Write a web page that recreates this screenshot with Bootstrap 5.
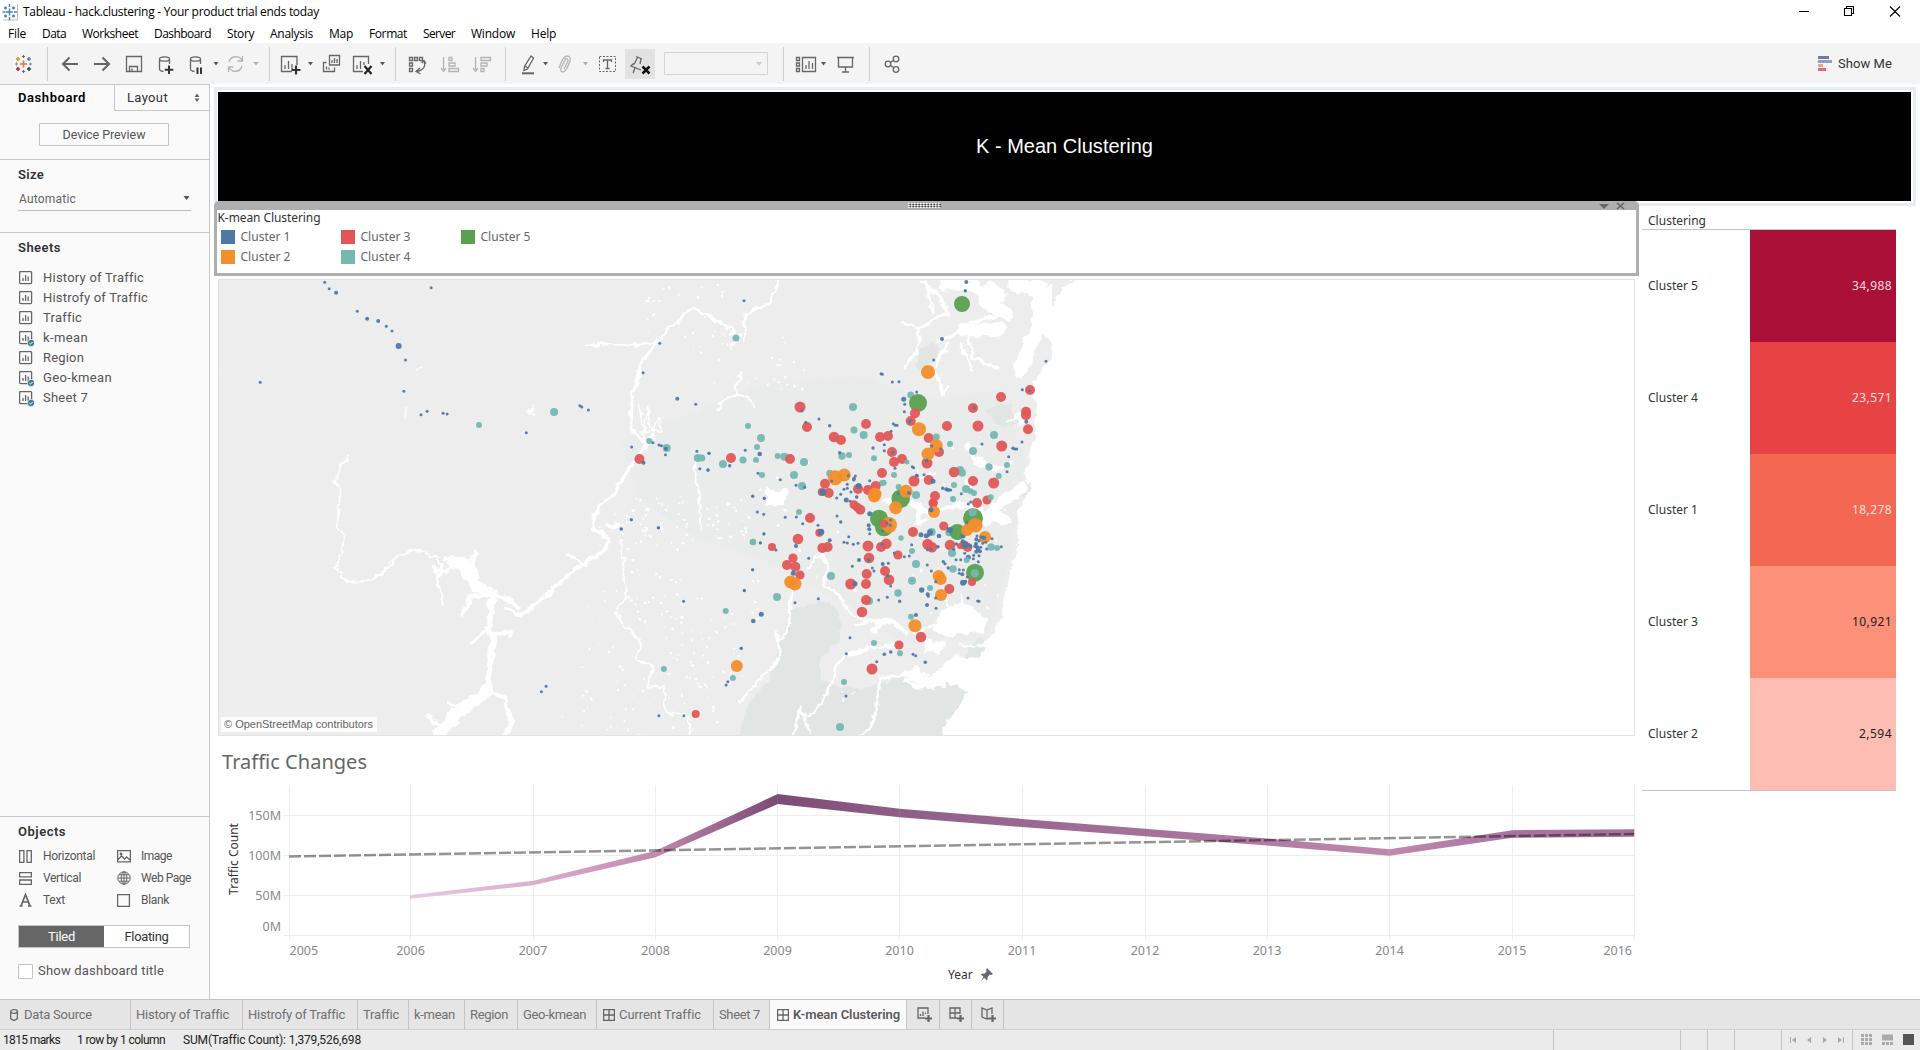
<!DOCTYPE html>
<html lang="en">
<head>
<meta charset="utf-8">
<title>Tableau - hack.clustering</title>
<link rel="stylesheet" href="https://cdn.jsdelivr.net/npm/bootstrap@5.3.0/dist/css/bootstrap.min.css">
<script src="https://cdn.jsdelivr.net/npm/bootstrap@5.3.0/dist/js/bootstrap.bundle.min.js"></script>
<style>
body{width:1920px;height:1050px;overflow:hidden;font:13px/16px Roboto,"Liberation Sans",sans-serif;color:#333;background:#fff}
svg{display:block;flex:none}
.win-font{font-family:"Open Sans","Noto Sans",sans-serif;font-size:12px;color:#000}
.viz-font{font-family:"Noto Sans","Open Sans",sans-serif;font-size:12px}
[data-w]{white-space:nowrap;display:inline-block}
.titlebar{height:23px}
.menubar{height:20px}
.menubar .nav-link{padding:3px 8px 1px;line-height:16px;color:#000}
.toolbar{height:41px;background:#f4f4f4}
.tool-group{height:34px;border-right:1px solid #cfcfcf}
.ico{fill:none;stroke:#666;stroke-width:1.3}
.faded{opacity:.45}
.caret-s{fill:#555;stroke:none}
.sidebar{width:210px;background:#fafafa;border-right:1px solid #c8c8c8;border-top:1px solid #c8c8c8}
.side-tabs{height:26px}
.tab-off{width:95px;border-left:1px solid #c8c8c8;border-bottom:1px solid #c8c8c8;padding-left:12px}
.tab-on{width:114px;padding-left:18px;padding-bottom:1px;color:#000}
.semi{font-weight:600}
.dev-btn{width:130px;height:23px;border:1px solid #c4c4c4;border-radius:1px;background:#fbfbfb;padding:0;font-size:12.5px;line-height:14px;margin:12px 0 0 39px;color:#555}
.side-rule{border-top:1px solid #c8c8c8}
.size-pick{width:173px;height:24px;margin-left:18px;border-bottom:1px solid #bbb;color:#666}
.sheet-row{height:20px;padding-left:19px;gap:11px;color:#555}
.obj-row{height:22px;font-size:12px;color:#555}
.obj-a{width:98px;gap:11px}
.obj-b{gap:10px}
.tile-switch{width:172px;height:23px;margin-left:18px;border:1px solid #c4c4c4;font-size:13px}
.tile-switch>div{width:50%}
.tile-on{background:#666;color:#fff}
.check-box{width:15px;height:15px;border:1px solid #c4c4c4;border-radius:1px;background:#fff}
.title-frame{width:1702px;height:119px;margin:3px 0 0 4px;border:3px solid #e2eef3;padding:2px 2px 2px 1px}
.title-black{background:#000;color:#fff;font:20px "Liberation Sans",Arial,sans-serif;height:109px}
.viz-row{margin-top:-5px}
.left-col{width:1425px;margin-left:4px}
.legend-frame{height:75px;border:3px solid #afafaf;border-top:0;border-radius:6px 6px 0 0;background:#fff;margin-left:-.5px;position:relative}
.legend-bar{height:9px;background:#afafaf;border-radius:5px 5px 0 0;margin:0 -3px}
.legend-grid{display:grid;grid-template-columns:120px 120px 120px;grid-auto-rows:20px;padding:1px 0 0 4px;color:#666}
.swatch{width:14px;height:14px;margin:-1px 6px 0 0}
.map-wrap{position:relative;width:1417px;height:457px;margin:3px 0 0 4px;border:1px solid #e2e2e2}
.attrib{position:absolute;left:2px;bottom:3px;width:156px;height:15px;background:#ffffffcc;font:11px/15px "Liberation Sans",sans-serif;color:#666;padding-left:3px}
.chart-title{height:49px;padding:11px 0 0 8px;font-size:20px;line-height:30px;color:#666}
.right-col{width:254px;margin-left:3px}
.table-head{height:29px;border-bottom:1px solid #c4c4c4;padding:11px 0 0 6px;line-height:18px}
.heat-row{height:112px;padding-left:6px}
.heat-cell{width:146px;height:112px;padding-right:4px}
.sheet-tabs{height:31px;background:#e5e5e5;border-top:1px solid #c4c4c4;border-bottom:1px solid #cfcfcf;color:#707070}
.sheet-tab{height:29px;border-right:1px solid #c4c4c4;padding-left:5px}
.status{height:20px;background:#ebebeb;color:#222;font-size:12px}
.stat-cell{height:20px;border-left:1px solid #c4c4c4}
</style>
</head>
<body class="d-flex flex-column">
<svg width="0" height="0" class="position-absolute">
<symbol id="sheet" viewBox="0 0 15 16"><rect x=".6" y=".6" width="12" height="12" rx="1"/><path d="M4 10V7M6.600 10V4M9.200 10V5.500"/></symbol>
<symbol id="sheetok" viewBox="0 0 15 16"><rect x=".6" y=".6" width="12" height="12" rx="1"/><path d="M4 10V7M6.600 10V4M9.200 10V5.500"/><circle cx="12" cy="12" r="3.6" style="fill:#3a7c94;stroke:#fafafa;stroke-width:.6"/><path d="M10.400 12l1.200 1.200 2-2.200" style="stroke:#fff;stroke-width:1"/></symbol>
<symbol id="dash" viewBox="0 0 12 12"><path d="M.6.6H11.400V11.400H.6ZM.6 6H11.400M6 .6V11.400"/></symbol>
</svg>
<header class="win-font">
 <div class="titlebar d-flex align-items-center justify-content-between">
  <div class="d-flex align-items-center">
   <svg width="23" height="22" viewBox="0 0 23 22"><path d="M3 19H17.500V3" fill="none" stroke="#bbb"/><g stroke="#4a87ad" stroke-width="1.500" fill="none"><path d="M9.500 7.500v7M6 11h7M9.500 3v3M9.500 16v3M2.500 11h3M14 11h3M5.500 5.500v3M4 7h3M13.500 5.500v3M12 7h3M5.500 13.500v3M4 15h3M13.500 13.500v3M12 15h3"/></g></svg>
   <span data-w="296">Tableau - hack.clustering - Your product trial ends today</span>
  </div>
  <svg width="130" height="22" viewBox="1790 0 130 22" fill="none" stroke="#000" stroke-width="1.100"><path d="M1799 10.500h10M1844.500 7.500h7v7h-7zM1846.500 7.500v-2h7v7h-2M1890 5.500l10 10M1900 5.500l-10 10"/></svg>
 </div>
 <nav class="menubar nav flex-nowrap">
  <a class="nav-link"><span data-w="18">File</span></a><a class="nav-link"><span data-w="24">Data</span></a><a class="nav-link"><span data-w="56">Worksheet</span></a><a class="nav-link"><span data-w="57">Dashboard</span></a><a class="nav-link"><span data-w="27">Story</span></a><a class="nav-link"><span data-w="43">Analysis</span></a><a class="nav-link"><span data-w="24">Map</span></a><a class="nav-link"><span data-w="38">Format</span></a><a class="nav-link"><span data-w="32">Server</span></a><a class="nav-link"><span data-w="44">Window</span></a><a class="nav-link"><span data-w="25">Help</span></a>
 </nav>
</header>
<div class="toolbar d-flex align-items-center">
 <div class="tool-group"><svg width="47" height="34" viewBox="0 47 47 34" fill="none" stroke-width="1.600"><path d="M23.500 60.500v7M20 64h7" stroke="#e8762d"/><path d="M18 57v4M16 59h4" stroke="#eb912c"/><path d="M29 57v4M27 59h4" stroke="#59879b"/><path d="M18 67v4M16 69h4" stroke="#c72035"/><path d="M29 67v4M27 69h4" stroke="#1f447e"/><path d="M23.500 55v3M22 56.500h3M23.500 70v3M22 71.500h3" stroke="#5b6591" stroke-width="1.200"/><path d="M15 64h3M16.500 62.500v3M29 64h3M30.500 62.500v3" stroke="#7a8fb5" stroke-width="1.200"/></svg></div>
 <div class="tool-group"><svg class="ico" width="221" height="34" viewBox="48 47 221 34">
  <path d="M78 64H63M69.500 57.500L63 64l6.500 6.500M94 64h15M102.500 57.500L109 64l-6.500 6.500" stroke-width="2"/>
  <path d="M126.500 56.500h15v15h-15zM129.500 71.500v-5h8v5M132 71.500v-3"/>
  <g id="db"><ellipse cx="164.500" cy="59" rx="5" ry="2.200"/><path d="M159.500 59v10q0 2 4 2.500M169.500 59v5"/></g><path d="M169 65.500v8.500M164.800 69.700h8.500" stroke="#333" stroke-width="2"/>
  <use href="#db" x="31"/><path d="M197.500 67.500v6.500M201 67.500v6.500" stroke="#333" stroke-width="2"/>
  <path class="caret-s" d="M213.500 62h5l-2.500 3.500z"/>
  <g class="faded"><path d="M229 62a7 7 0 0 1 13-1.500M242 66a7 7 0 0 1-13 1.500M242.500 56v5h-5M228.500 72v-5h5"/><path class="caret-s" d="M253.500 62h5l-2.500 3.500z"/></g></svg></div>
 <div class="tool-group"><svg class="ico" width="125" height="34" viewBox="270 47 125 34">
  <path d="M297 65V56.500H281.500V71.500H292M285 69v-4M288.500 69v-8M292 69v-5"/><path d="M296 65.500v9M291.500 70h9" stroke="#333" stroke-width="2.200"/><path class="caret-s" d="M308 62h5l-2.500 3.500z"/>
  <path d="M329.500 55.500h10v9.500h-10zM332 63v-3M334.500 63v-5M337 63v-4M326.500 62.500h-3v9h11v-4M326.500 69.500v-3M329 69.500v-2"/>
  <path d="M368.500 64V56.500H353.500V71.500H363M357 69v-4M360.500 69v-8M364 65v-3"/><path d="M364.500 66l7 8M371.500 66l-7 8" stroke="#222" stroke-width="2.200"/><path class="caret-s" d="M380 62h5l-2.500 3.500z"/></svg></div>
 <div class="tool-group"><svg class="ico" width="109" height="34" viewBox="396 47 109 34">
  <path d="M409.500 57.500h3v3h-3zM414.500 57.500h3v3h-3zM419.500 57.500h3v3h-3zM409.500 63h3v3h-3zM409.500 68.500h3v3h-3zM424 61q3 8-7 10.500M420 68l-4 3.500 4.500 2.500M421.500 63l2.500-2.500 2 3"/>
  <g class="faded"><path d="M443.500 57v14M441 68l2.500 3.500 2.500-3.500M449 57.500h3v3h-3zM449 63h6v3h-6zM449 68.500h9.500v3H449zM475.500 57v14M473 68l2.500 3.500 2.500-3.500M481 57.500h9.500v3H481zM481 63h6v3h-6zM481 68.500h3v3h-3z"/></g></svg></div>
 <div class="tool-group"><svg class="ico" width="277" height="34" viewBox="506 47 277 34">
  <path d="M531 56l2.500 2-6 11-3.500 1.500.500-4zM525 66l3 2"/><path d="M522 73.300h12" stroke-width="2"/><path class="caret-s" d="M543 62h5l-2.500 3.500z"/>
  <g class="faded"><path d="M564 69l4-8q0-3-2.500-2l-4.500 9q-1 4 2 4t7-11q1-5-3-5t-8 12"/><path class="caret-s" d="M583 62h5l-2.500 3.500z"/></g>
  <path d="M599.500 56.500h16v15h-16z" stroke-dasharray="2 1.500" stroke-width="1"/><path d="M603.500 62v-2h8v2M607.500 60v8.500M605.500 68.500h4"/>
  <path d="M625 49h30v30h-30z" fill="#e2e2e2" stroke="none"/><path d="M636 56.500l6 2.500M637.500 57.500l-3 6q-2 .5-3.500 2.500l10 4M641 59l-1 5M635.500 67l-2.500 6"/><path d="M642.500 66.500l7 7M649.500 66.500l-7 7" stroke="#111" stroke-width="2.500"/>
  <path d="M664.500 52.500h103v22h-103z" stroke="#d4d4d4" stroke-width="1"/><path d="M756 62h6l-3 4z" style="fill:#ccc;stroke:none"/></svg></div>
 <div class="tool-group"><svg class="ico" width="85" height="34" viewBox="784 47 85 34"><path d="M796.500 57.500h3v3h-3zM796.500 63h3v3h-3zM796.500 68.500h3v3h-3zM802.500 57.500h13v14h-13zM806 69v-4M809 69v-8M812.500 69v-6"/><path class="caret-s" d="M821 62h5l-2.500 3.500z"/><path d="M837 57.500h17M838.500 57.500v9.500h14v-9.500M845.500 67v5M842 72h7"/></svg></div>
 <svg class="ico" width="40" height="34" viewBox="870 47 40 34"><circle cx="888" cy="64" r="2.800"/><circle cx="896" cy="59" r="2.800"/><circle cx="896" cy="69.500" r="2.800"/><path d="M890.500 62.500l3-2M890.500 65.500l3 2"/></svg>
 <div class="ms-auto d-flex align-items-center" style="padding-right:28px"><svg width="20" height="17" viewBox="0 0 20 17"><path fill="#77789a" d="M0 1h11v3H0z"/><path fill="#86a3c9" d="M0 5h14v3H0z"/><path fill="#e0a885" d="M0 9h5v3H0z"/><path fill="#ea6475" d="M0 13h8v3H0z"/></svg><span data-w="54">Show Me</span></div>
</div>
<div class="d-flex flex-grow-1" style="height:915px">
 <aside class="sidebar d-flex flex-column flex-shrink-0">
  <div class="side-tabs d-flex"><div class="tab-on semi d-flex align-items-center"><span data-w="68">Dashboard</span></div><div class="tab-off d-flex align-items-center justify-content-between pe-2"><span data-w="41">Layout</span><svg width="7" height="10"><path fill="#666" d="M.5 4l2.500-3.500L5.500 4zM.5 5.500l2.500 3.500 2.500-3.500z"/></svg></div></div>
  <button class="btn dev-btn"><span data-w="83">Device Preview</span></button>
  <div class="side-rule" style="margin-top:13px;height:73px;padding-top:7px"><div class="semi ps-1" style="margin-left:14px"><span data-w="26">Size</span></div><div class="size-pick d-flex align-items-center justify-content-between mt-1" style="padding-left:1px"><span data-w="57" style="font-size:12px">Automatic</span><svg width="8" height="5"><path fill="#555" d="M.5 0h6L3.500 4z"/></svg></div></div>
  <div class="side-rule" style="padding-top:7px">
   <div class="semi" style="padding-left:18px;margin-bottom:12px"><span data-w="43">Sheets</span></div>
   <div class="sheet-row d-flex align-items-center"><svg class="ico" width="13" height="14" style="overflow:visible"><use href="#sheet" width="15" height="16"/></svg><span data-w="100">History of Traffic</span></div>
   <div class="sheet-row d-flex align-items-center"><svg class="ico" width="13" height="14" style="overflow:visible"><use href="#sheet" width="15" height="16"/></svg><span data-w="104">Histrofy of Traffic</span></div>
   <div class="sheet-row d-flex align-items-center"><svg class="ico" width="13" height="14" style="overflow:visible"><use href="#sheet" width="15" height="16"/></svg><span data-w="38">Traffic</span></div>
   <div class="sheet-row d-flex align-items-center"><svg class="ico" width="13" height="14" style="overflow:visible"><use href="#sheetok" width="15" height="16"/></svg><span data-w="45">k-mean</span></div>
   <div class="sheet-row d-flex align-items-center"><svg class="ico" width="13" height="14" style="overflow:visible"><use href="#sheet" width="15" height="16"/></svg><span data-w="41">Region</span></div>
   <div class="sheet-row d-flex align-items-center"><svg class="ico" width="13" height="14" style="overflow:visible"><use href="#sheetok" width="15" height="16"/></svg><span data-w="69">Geo-kmean</span></div>
   <div class="sheet-row d-flex align-items-center"><svg class="ico" width="13" height="14" style="overflow:visible"><use href="#sheetok" width="15" height="16"/></svg><span data-w="45">Sheet 7</span></div>
  </div>
  <div class="side-rule mt-auto" style="height:183px;padding-top:7px">
   <div class="semi" style="padding-left:18px;margin-bottom:5px"><span data-w="48">Objects</span></div>
   <div class="obj-row d-flex align-items-center" style="padding-left:19px"><div class="obj-a d-flex align-items-center"><svg class="ico" width="13" height="13"><path d="M.6.6h4.300v11.800H.6zM8 .6h4.300v11.800H8z"/></svg><span data-w="52">Horizontal</span></div><div class="obj-b d-flex align-items-center"><svg class="ico" width="14" height="13"><path d="M.6.6h12.800v11.300H.6zM.6 10l4-4 3 3 2-2 4 3.500"/><circle cx="4" cy="4" r=".8"/></svg><span data-w="31">Image</span></div></div>
   <div class="obj-row d-flex align-items-center" style="padding-left:19px"><div class="obj-a d-flex align-items-center"><svg class="ico" width="13" height="13"><path d="M.6.6h11.800v4.300H.6zM.6 8h11.800v4.300H.6z"/></svg><span data-w="38">Vertical</span></div><div class="obj-b d-flex align-items-center"><svg class="ico" width="14" height="14" style="stroke-width:1"><circle cx="7" cy="7" r="6.200"/><ellipse cx="7" cy="7" rx="2.800" ry="6.200"/><path d="M7 1v12M1 7h12M2 3.800h10M2 10.200h10"/></svg><span data-w="50">Web Page</span></div></div>
   <div class="obj-row d-flex align-items-center" style="padding-left:19px"><div class="obj-a d-flex align-items-center"><svg class="ico" width="13" height="14"><path d="M2 13L6.500 1.500 11 13M3.500 9h6M.5 13h3M9 13h3.500" stroke-width="1.700"/></svg><span data-w="22">Text</span></div><div class="obj-b d-flex align-items-center"><svg class="ico" width="14" height="13"><path d="M.6.6h11.800v11.800H.6z"/></svg><span data-w="28">Blank</span></div></div>
   <div class="tile-switch d-flex" style="margin-top:14px"><div class="tile-on d-flex align-items-center justify-content-center"><span data-w="27">Tiled</span></div><div class="bg-white d-flex align-items-center justify-content-center"><span data-w="44">Floating</span></div></div>
   <div class="d-flex align-items-center" style="margin:15px 0 0 18px;gap:5px;color:#555"><div class="check-box"></div><span data-w="126">Show dashboard title</span></div>
  </div>
 </aside>
 <main class="d-flex flex-column flex-grow-1">
  <div class="title-frame"><div class="title-black d-flex align-items-center justify-content-center"><span data-w="177">K - Mean Clustering</span></div></div>
  <div class="viz-row d-flex viz-font">
   <div class="left-col">
    <div class="legend-frame"><div class="legend-bar"><svg width="1424" height="9" viewBox="214 201 1424 9"><path d="M908 203.500h33M908 205.500h33M908 207.500h33" stroke="#fff" stroke-width="1.200" stroke-dasharray="1.500 1.500"/><path d="M909.500 204.500h32M909.500 206.500h32" stroke="#444" stroke-dasharray="1.500 1.500"/><path d="M1599 204h10l-5 5z" fill="#666"/><path d="M1617 203l7 6M1624 203l-7 6" stroke="#666" stroke-width="1.600"/></svg></div>
     <div style="padding-left:1px;line-height:16px"><span data-w="103">K-mean Clustering</span></div>
     <div class="legend-grid">
      <div class="d-flex align-items-center"><div class="swatch" style="background:#4e79a7"></div><span data-w="50">Cluster 1</span></div><div class="d-flex align-items-center"><div class="swatch" style="background:#e15759"></div><span data-w="50">Cluster 3</span></div><div class="d-flex align-items-center"><div class="swatch" style="background:#59a14f"></div><span data-w="50">Cluster 5</span></div>
      <div class="d-flex align-items-center"><div class="swatch" style="background:#f28e2b"></div><span data-w="50">Cluster 2</span></div><div class="d-flex align-items-center"><div class="swatch" style="background:#76b7b2"></div><span data-w="50">Cluster 4</span></div>
     </div></div>
    <div class="map-wrap">
     <svg id="map" width="1415" height="455" viewBox="219 280 1415 455">
      <defs><filter id="rough" x="0" y="0" width="100%" height="100%"><feTurbulence type="fractalNoise" baseFrequency=".11" numOctaves="3" seed="4"/><feDisplacementMap in="SourceGraphic" scale="8" xChannelSelector="R" yChannelSelector="G"/></filter></defs>
      <g filter="url(#rough)">
       <path fill="#ededed" d="M190 250H1062L1060 275 1077 282 1062 288 1054 305 1045 318 1043 330 1050 338 1053 350 1047 362 1042 372 1034 381 1032 393 1037 405 1035 425 1036 435 1030 450 1029 465 1020 474 1031 487 1027 497 1018 512 1018 547 1012 567 1005 593 1001 620 996 632 987 640 980 657 953 655 940 668 947 690 937 712 925 722 918 760H190Z"/>
       <path fill="#e8e9e9" d="M620 440L700 410 760 385 860 375 930 400 1000 390 1025 460 1010 560 985 640 900 640 840 600 760 560 700 540 640 500Z" opacity=".7"/>
       <path fill="#e1e6e5" d="M790 610l30-8 20 8 0 30-20 20 0 20 40 10 40-12 45 2 22 12-10 20-12 10-7 38H740l-2-25 10-30 20-25 10-30z"/>
       <path fill="#e1e6e5" d="M980 640l6 0 -6 16-14 0 2-12zM915 355l20-15 4 16-20 14zM985 410l25-8 8 18-15 8zM1020 487l10-5v10l-6 6z"/>
      </g>
      <g filter="url(#rough)" fill="none" stroke="#fff" stroke-linejoin="round" stroke-linecap="round">
       <!-- western rivers -->
       <g stroke-width="2.500">
        <path stroke-width="2" d="M349 455l-8 12-6 15 6 15-5 28 8 10-3 22-6 10 12 15 20-1 12-5 20-20 18-6 20 7 6 7-8 8 5 18 3 14"/>
        <path d="M586 346l20-3 20 3 34-5 8-13 25-19 20 9 20 12 6 6-8 12M744 340l2-28 22-8 8-14 1-12"/><path stroke-width="3" d="M655 344l-14 20-8 27-2 28 2 12 12 10"/><path d="M621 541l3 22-1 18 5 15-13 15 8 15 18 15-5 18 18 8-6 20 15-2 4 28 22 2 1 28 15 8 0 32" stroke-width="2"/>
        <path stroke-width="2" d="M740 372l-4 22-13 6-5 10M738 394l10 3 6 10M696 460l4 50 2 20"/>
        <path d="M740 703l12-14 20-22 8-12-5-22 4 8 5-3 5-15 2-30M808 570l8-14 12 4-3 25 15 10 8 17 15 8M855 625l20-3 15-2M868 650l-20 5-12 10-3 14-12 25-14 12M896 645l-18 2-20 3"/>
        <path d="M928 674l-48 3-3 25-6 25-14 10M800 710l-6 24M800 708l10 24"/>
       </g>
       <path stroke-width="3.500" d="M652 437l-20 27-18 30-14 10-8 15 2 10 16 10-8 12-34 24-28 26-20 15-14-8M606 526h12"/>
       <path stroke-width="2.500" d="M568 555l14 10-14 10"/>
       <path stroke-width="4" d="M445 558l12 6 12 18 15 12 20 2 14 12M475 552l-2 16M437 575l12-8M433 568l15 4M490 595l-20 2-8 18M488 632l24 2M486 628l-14 14M488 690l16 8 7 24-5 14M428 716l14 10M450 704l15 2"/>
       <path stroke-width="12" d="M452 561l16 6 8 20M488 690l-30 22-18 22"/><path stroke-width="7" d="M479 590l14 3-4 35 4 8-6 55-12 12"/>
       <path stroke-width="1.500" d="M640 402l4 35 3-30 5 30 5-20M640 432l22 0-4-14M646 410l8 28M404 418l3-10-2 8M528 412l5-8-2 8 5 2M417 370l5-3M218 375v8"/>
       <!-- Hawkesbury and northern beaches -->
       <path stroke-width="3" d="M922 283l16 10 10 20-12 5-12 8-6 4-15-8M918 328v25l-10 8-4 8M940 342l15-8 18-12 28-7M968 338l5 20 24 10M947 345l-12 25 8 25 5-8M932 310l-6-28M960 344l12 26"/>
       <path stroke-width="13" d="M945 284l28 0 14 18 20 12M1000 295l-10-8M965 330l35 0"/>
       <path stroke-width="14" d="M1038 285v40l-10 25-8 20M1015 284l20 6M1052 290l-4 40"/>
       <!-- harbour and bays -->
       <path stroke-width="5" d="M885 500l30 4 15 10 20-8 20 0 15 8 20-12 20-12M920 505l-3 18 8-3M967 447l10 16 20 6"/>
       <path stroke-width="10" d="M975 507l12 14 13-18 18-12M990 515l15 5M1015 495l8-8"/><path stroke-width="3" d="M970 452l20 15 12 0 10-5M920 478l15-4M965 480l8 12"/>
       <path stroke-width="5" d="M825 562l-3-6M865 620l15 3 15 0 10 10M885 620l-12 10M905 680l15 8 20-5"/>
       <path fill="#fff" d="M940 612l20-8 12 3 14 12-3 12-22 2-14 4-12-8zM926 640l19 4-5 10-14-3zM767 489l10 4 10-3 0 10-8 5-12-2zM905 675l12-9 10 12 15-8 4 16-20 2-12-8zM1018 415l10-2-8 12z" stroke-width="2"/>
       <path stroke-width="2" d="M935 625l-20 8M950 608l-4-14M965 610l-4-14M1006 423l18-10M995 640l-20 8-15-3"/>
      </g>
      <g id="specks" fill="#fff"></g>
      <g id="marks" fill-opacity=".95"></g>
     </svg>
     <div class="attrib"><span data-w="149">© OpenStreetMap contributors</span></div>
    </div>
    <div class="chart-title"><span data-w="145">Traffic Changes</span></div>
    <svg id="chart" width="1421" height="214" viewBox="218 785 1421 214" style="margin-left:4px" font-size="12.500" fill="#888"></svg>
   </div>
   <div class="right-col">
    <div class="table-head"><span data-w="58">Clustering</span></div>
    <div style="border-bottom:1px solid #c4c4c4;height:561px">
     <div class="heat-row d-flex align-items-center justify-content-between"><span data-w="50">Cluster 5</span><div class="heat-cell d-flex align-items-center justify-content-end" style="background:#ab1138;color:#f3dde2"><span data-w="40">34,988</span></div></div>
     <div class="heat-row d-flex align-items-center justify-content-between"><span data-w="50">Cluster 4</span><div class="heat-cell d-flex align-items-center justify-content-end" style="background:#e74344;color:#fbe0e0"><span data-w="40">23,571</span></div></div>
     <div class="heat-row d-flex align-items-center justify-content-between"><span data-w="50">Cluster 1</span><div class="heat-cell d-flex align-items-center justify-content-end" style="background:#f46853;color:#fde3df"><span data-w="40">18,278</span></div></div>
     <div class="heat-row d-flex align-items-center justify-content-between"><span data-w="50">Cluster 3</span><div class="heat-cell d-flex align-items-center justify-content-end" style="background:#fc9078;color:#222"><span data-w="40">10,921</span></div></div>
     <div class="heat-row d-flex align-items-center justify-content-between"><span data-w="50">Cluster 2</span><div class="heat-cell d-flex align-items-center justify-content-end" style="background:#febdb2;color:#222"><span data-w="33">2,594</span></div></div>
    </div>
   </div>
  </div>
 </main>
</div>
<footer>
 <div class="sheet-tabs d-flex">
  <div class="sheet-tab d-flex align-items-center" style="width:131px;padding-left:10px"><svg class="ico" width="14" height="12"><ellipse cx="4" cy="2.500" rx="3.400" ry="1.800"/><path d="M.6 2.500v7q3.400 3.500 6.800 0v-7"/></svg><span data-w="68">Data Source</span></div>
  <div class="sheet-tab d-flex align-items-center" style="width:112px"><span data-w="92">History of Traffic</span></div>
  <div class="sheet-tab d-flex align-items-center" style="width:115px"><span data-w="96">Histrofy of Traffic</span></div>
  <div class="sheet-tab d-flex align-items-center" style="width:51px"><span data-w="35">Traffic</span></div>
  <div class="sheet-tab d-flex align-items-center" style="width:56px"><span data-w="41">k-mean</span></div>
  <div class="sheet-tab d-flex align-items-center" style="width:53px"><span data-w="38">Region</span></div>
  <div class="sheet-tab d-flex align-items-center" style="width:79px"><span data-w="63">Geo-kmean</span></div>
  <div class="sheet-tab d-flex align-items-center" style="width:117px;padding-left:6px"><svg class="ico me-1" width="12" height="12"><use href="#dash"/></svg><span data-w="81">Current Traffic</span></div>
  <div class="sheet-tab d-flex align-items-center" style="width:56px"><span data-w="41">Sheet 7</span></div>
  <div class="sheet-tab d-flex align-items-center semi" style="width:137px;padding-left:7px;background:#fafafa;color:#5a5a5a"><svg class="ico me-1" width="12" height="12"><use href="#dash"/></svg><span data-w="107">K-mean Clustering</span></div>
  <div class="sheet-tab" style="width:33px;padding:7px 0 0 10px"><svg class="ico" width="17" height="17"><path d="M11 7V1H1v10h7M3.500 9V7M6 9V4.500M8.500 7V5.500"/><path d="M11.500 8v7M8 11.500h7" stroke-width="2.200"/></svg></div>
  <div class="sheet-tab" style="width:32px;padding:7px 0 0 9px"><svg class="ico" width="17" height="17"><path d="M11 7V1H1v10h7M1 6h10M6 1v10"/><path d="M11.500 8v7M8 11.500h7" stroke-width="2.200"/></svg></div>
  <div class="sheet-tab" style="width:32px;padding:7px 0 0 9px"><svg class="ico" width="17" height="17"><path d="M11 7V1L6 3 1 1v9l5 2 2-.5M6 3v9"/><path d="M11.500 8v7M8 11.500h7" stroke-width="2.200"/></svg></div>
 </div>
 <div class="status d-flex align-items-center">
  <span data-w="57" style="margin-left:3px">1815 marks</span><span data-w="88" style="margin-left:17px">1 row by 1 column</span><span data-w="177" style="margin-left:18px">SUM(Traffic Count): 1,379,526,698</span>
  <div class="ms-auto d-flex"><div class="stat-cell" style="width:127px"></div><div class="stat-cell" style="width:27px"></div><div class="stat-cell" style="width:27px"></div><div class="stat-cell" style="width:47px"></div>
  <div class="stat-cell" style="width:71px"><svg width="70" height="20" viewBox="1782 1030 70 20" fill="#aaa"><path d="M1790 1037h1v6h-1zM1796 1037v6l-4-3zM1811 1037v6l-4-3zM1823 1037v6l4-3zM1838 1037v6l4-3zM1843 1037h1v6h-1z"/></svg></div>
  <div class="stat-cell" style="width:68px"><svg width="67" height="20" viewBox="1853 1030 67 20" fill="none" stroke="#aaa"><path d="M1861 1035.500h11M1861 1039.500h11M1861 1043.500h11" stroke-width="3" stroke-dasharray="3 1"/><path d="M1882 1037.500h11" stroke-width="6"/><path d="M1882 1043.500h11" stroke-width="3" stroke-dasharray="3 1"/><path d="M1903 1039.500h11" stroke="#555" stroke-width="11"/></svg></div></div>
 </div>
</footer>
<script>
const NS='http://www.w3.org/2000/svg';
function add(parent,tag,attrs,text){const e=document.createElementNS(NS,tag);for(const k in attrs)e.setAttribute(k,attrs[k]);if(text)e.textContent=text;parent.appendChild(e);return e}
// Sensor readings by map tile: origin, scale, then "cluster x y radius" entries
const ink={b:'#4e79a7',t:'#76b7b2',r:'#e15759',o:'#f28e2b',g:'#59a14f'};
const tiles=[
[210,190,2.45,3,`b281 277;b292 296;b309 308 2;b361 364;b385 386 2;b412 393 2;b432 409;b446 423;b462 468 3;b479 510;b542 293;b123 577;b475 604;b517 674;b532 664;b571 670;b581 672;t659 705 3;t843 666 4;b775 728;b906 647;b911 651;b927 660;b1061 548;b1102 460;b1145 626 2;b1190 643;b1033 771;t1076 753 3;b1085 758;b1100 765;b1106 767;t1119 774 4;b1117 776 2;b1116 794;r1052 807 5;b1062 818 2;b1193 784;t1195 804 4;t1205 804 3.500;b1222 790;b1200 836;b1220 840;b1032 989;b1098 1013;b1007 1016`],
[700,270,3,3,`b132 92;t108 204 3.500;b799 36 2;b796 62 1.700;g786 102 8;b726 207 2;b701 270;o684 306 7;b543 311;b547 313;b577 336;b597 335;b1038 274;b967 359;r990 360 5;b988 362;r903 381 5;r819 414 5;b823 413;r978 425 5;r978 436 5;b979 455 2;r984 478 5;t632 375 3.500;b650 366;b611 388 2.500;b614 403;b613 425;g654 399 9;r645 430 5;r632 453 5;b628 455 1.700;b633 451;o657 478 7;r300 411 5.500;b306 422;t459 411 4;r321 471 5;b317 457;b357 447;b389 467 1.700;r498 462 5;t462 480 3.500;t491 495 4;r540 501 5;r564 498 5;b573 484;b580 461;b586 466;b591 466;t144 468 3;t183 504 4;t171 531 3;b179 552 2.300;b136 541;t129 570 3.600;t168 570 3;r93 564 5;b89 587 1.700;t69 582 4;b28 550;b24 600 1.700;t5 564 3;t233 558 3;t253 560 4;r270 567 5;t312 576 4;t282 615 4;t186 615 3;b174 610;b241 629;t306 648 4;b288 646;b314 652;b158 679;b193 685;r402 501 5.300;r423 510 5;t426 558 3.700;t447 555 3;b419 548 1.700;b519 534 1.700;b553 524;b553 542;r576 546 5;b578 547;t522 565 3;r582 576 5;r606 567 5;t621 576 2.500;b585 595;b637 590;b641 593;r686 504 5;t709 501 3.500;b695 527 2;r717 546 5;o709 527 6.500;b722 537;b695 528;r681 579 5.500;o684 552 6.500;b680 572 2;t750 522 3;r741 468 5;r834 468 5.500;t882 495 4;r905 528 5.500;b846 522;t819 543 4;b939 535 1.700;b945 537;b950 537;b966 516;b926 560;t921 585 3;b921 605;t867 591 3.700;t896 618 3;t780 600 4;t786 608 4;r762 606 5.300;r819 633 5;r881 639 5.500;t762 645 3;t798 657 4;t812 664 3;t822 669 3;b784 671;t759 687 3;b728 655 1.700;b739 658 2;b745 660 2;b752 660;t546 639 3;r546 609 5;t582 615 3;b650 617 2;r642 633 5.500;b651 617;b672 614;r686 630 5;b699 634 2.500;t389 610 3.500;r375 641 5;o406 623 7.500;o433 615 6.500;b395 633;b445 617;b462 626 2;b466 618;b461 630;r365 666 4;r386 669 5;b368 667 3.500;b442 643;b442 655;b432 658;b453 666;b410 684;b422 673;b439 690 2.500;r474 657 5;b476 648 3;b509 632;r504 660 5;r527 648 5;o525 672 6.500;t551 638 3;t596 651 3;g602 686 9.300;o618 664 6.500;b627 669 2;b595 671;t648 675 4;r705 678 5;r699 699 4.500;r831 699 5;r861 690 4.500;t872 682 3;b805 702;b812 696;b470 681 1.700`],
[740,470,3,3,`o403 78 6.500;b331 94;b350 81;t177 126 3;b52 126;b71 133;b136 142;b169 141;b188 161;r210 144 5;b234 166;b291 138;b302 156 1.700;r342 104 4.500;r361 119 5;b347 104;r352 112 4.500;b389 131 2.500;o467 113 6.500;r580 99 4.500;o582 126 6;b573 119 2.500;b38 78;b73 85;b72 191;r174 207 5.300;b168 228 2;t39 216 3;b61 218;r96 231 4;b108 240;r238 188 4;b243 186 3.300;r247 234 5;r263 231 5;b269 211 2;r159 264 4.600;r141 285 5;r166 290 5;r180 315 4.600;b160 310 2.500;b206 265;o152 336 6.500;o165 342 6.500;t111 381 4;b165 398;b235 386;b38 299;b13 361;b64 433 2.500;b40 453 2.300;t273 318 4;b312 217;b322 219;b340 223;b354 220;b326 200;b389 191;b388 178 2;b337 289;b357 270 2;b386 166 2;g417 146 9;g432 172 9;o447 165 8;r432 161 4;b428 182;b441 160;b451 166;b452 150;r384 228 5.500;r423 231 5;r439 221 5.300;b426 223;r387 264 5.300;b386 270 2;b397 294;b402 303;b428 282 2;b445 280;r435 303 5;r447 329 5.300;b443 318 1.700;b452 348 1.500;r380 312 5;r378 342 5;r332 342 5.500;b345 341 2.500;t387 393 4;r378 390 5;r366 426 5.300;b416 390;b442 382;b479 394 1.700;t474 369 3.700;t516 332 4;r474 255 4.600;b463 249;b493 260;b508 258;t516 243 3;b515 224;t528 282 4;t483 204 2.700;r519 186 5;b543 194 2.500;b559 197 2.500;t575 186 4;b570 187 3;b566 196;b597 198 2.300;b562 285;b574 303;r563 223 5.500;r576 232 5.300;b562 239;b594 230 1.700;b574 238;r611 168 4.600;t628 187 4;g652 186 8;b629 180 3;b669 198 2.500;r630 225 5.300;t636 249 4;b649 222 1.700;b641 238;r660 228 3;r672 225 4.500;r683 232 4.600;b668 214 2;b676 225 3.500;b691 228 2;g699 145 10;t698 127 4;o706 166 7.300;o681 180 6;b680 156;o735 201 6;b731 203 2.300;b756 206;b711 198;b709 208 2;b723 201;b708 221 2;b717 212 1.700;b728 220;b737 217;b712 232 2;b709 245 2;b720 244 2;b717 257;b701 256;b700 266;b715 275;b740 237;t753 231 3.700;t771 234 3;b784 230;b685 262 2.500;t680 270 3;b674 250;b662 269;b648 269;b610 275 1.700;b615 281;b625 294 1.700;t639 297 3.700;b658 299;b670 300;b667 313 2;b658 310;g705 308 9;t704 310 4;r696 336 4;b669 338 3;b676 335 2;b682 321;o596 318 6;o602 327 6;b587 335;r628 357 5;t570 354 3;b545 360 2.700;b563 373 2;b565 379;o603 375 6;b587 384;b561 405 2;b588 415;b684 384;b713 393;b717 394;t513 440 3;b528 435 2;o525 467 6.500;r543 501 5.300;r477 525 4.600;t480 550 3;t402 519 3;b330 503;b319 551;b433 553 1.800;b452 546 1.800;b519 553;b527 557;b556 577 1.800;b410 575;r396 597 5.500;t312 636 3;b318 678;t300 771 4;b4 535;b714 238 2;b706 229 2;b722 232`],
[210,430,2.8,3,`b1180 269;b1152 297;b1256 293;b1326 514;t1444 543 3;b1496 482;b1519 419;b1551 312;t1520 336 3.300;b1541 339;b1487 655;o1475 708 6;t1464 744 3;b1450 755;b1445 765;t1271 717 3;b941 769;b928 785;r1360 852 4;b1257 857;b1327 857`]];
const marks=document.getElementById('marks');
for(const [x0,y0,sx,sy,list] of tiles)for(const s of list.split(';')){const [x,y,r]=s.slice(1).split(' ').map(Number);add(marks,'circle',{cx:(x0+x/sx).toFixed(1),cy:(y0+y/sy).toFixed(1),r:r||1.5,fill:ink[s[0]]})}
// Small ponds and reservoirs scattered around the plain
let seed=7;const rnd=()=>(seed=(seed*16807)%2147483647)/2147483647;
const specks=document.getElementById('specks');
for(const [x,y,w,h,n] of [[600,490,90,60,40],[640,500,110,40,45],[630,560,60,70,30],[660,590,50,100,28],[580,590,60,140,22],[640,660,80,70,28],[645,285,90,70,35],[770,330,40,60,14],[700,600,60,90,20],[560,690,80,45,14],[700,350,80,40,9],[840,690,20,14,5],[880,430,130,220,30],[740,450,120,160,14]])
 for(let i=0;i<n;i++){const px=x+rnd()*w,py=y+rnd()*h;add(specks,'ellipse',{cx:px.toFixed(1),cy:py.toFixed(1),rx:(.5+rnd()*1.5).toFixed(1),ry:(.5+rnd()).toFixed(1),transform:`rotate(${(rnd()*180)|0} ${px.toFixed(1)} ${py.toFixed(1)})`})}
// Traffic line chart
const ch=document.getElementById('chart');
const xs=[289,410.5,533,655.5,777.5,899.5,1022,1145,1267,1389.5,1512,1634];
for(const x of xs)add(ch,'path',{d:`M${Math.floor(x)+.5} 785V940`,stroke:'#eee'});
[['150M',815.5,815],['100M',855.5,855],['50M',895.5,895],['0M',935.5,926]].forEach(([t,y,ty])=>{add(ch,'path',{d:`M284 ${y}H1634`,stroke:'#eee'});add(ch,'text',{x:281,y:ty+5,'text-anchor':'end'},t)});
xs.forEach((x,i)=>add(ch,'text',{x:i==0?289.5:i==11?1632:x,y:954.5,'text-anchor':i==0?'start':i==11?'end':'middle'},String(2005+i)));
const line=[[410,897,3.5,'#e8c8df'],[533,883,4.5,'#dcb0cf'],[655.5,854,6.5,'#c287ad'],[777.5,799,10,'#7b4a75'],[899.5,813,8.7,'#8f5f8a'],[1022,823,8.2,'#996792'],[1145,832.5,7.7,'#a57199'],[1267,842,7,'#b27ba4'],[1389.5,852.5,6.3,'#bf88af'],[1512,834,7.7,'#a8749f'],[1634,833,7.7,'#a5719b']];
const defs=add(ch,'defs',{});
for(let i=0;i<10;i++){const [x1,y1,w1,c1]=line[i],[x2,y2,w2,c2]=line[i+1];const g=add(defs,'linearGradient',{id:'seg'+i});add(g,'stop',{offset:0,'stop-color':c1});add(g,'stop',{offset:1,'stop-color':c2});
 add(ch,'path',{d:`M${x1} ${y1-w1/2}L${x2+.3} ${y2-w2/2}V${y2+w2/2}L${x1} ${y1+w1/2}Z`,fill:`url(#seg${i})`})}
add(ch,'path',{d:'M289 856.5L1634 834',stroke:'#000','stroke-opacity':.42,'stroke-width':2.4,'stroke-dasharray':'12 3'});
add(ch,'text',{transform:'translate(238 859) rotate(-90)','text-anchor':'middle',fill:'#333','font-size':12},'Traffic Count');
add(ch,'text',{x:948,y:978.5,fill:'#333','font-size':12},'Year');
add(ch,'path',{d:'M987 968l6 6-2 1-1-.5-2.500 2.500q.5 2-.5 3.500l-2.800-2.800-3.700 4 3-4.800-2.700-2.700q2-1 3.500-.5l2.500-2.500-.8-1z',fill:'#667'});
// Track each label to its design width
document.querySelectorAll('[data-w]').forEach(e=>{const n=e.textContent.length,w=e.getBoundingClientRect().width,t=+e.dataset.w;e.style.letterSpacing=((t-w)/n).toFixed(3)+'px'});
</script>
</body>
</html>
